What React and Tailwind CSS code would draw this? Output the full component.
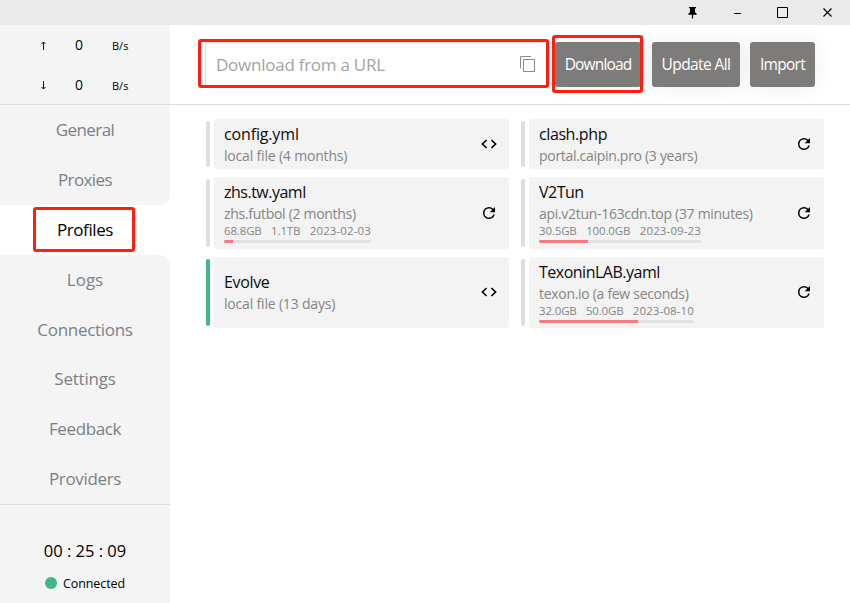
const NAV = ['General', 'Proxies', 'Profiles', 'Logs', 'Connections', 'Settings', 'Feedback', 'Providers'];

// tracking classes keep each label at its intended width
const NAV_TRACKING = {
  General: 'tracking-[-0.6px]',
  Proxies: 'tracking-[-0.6px]',
  Profiles: 'tracking-[-0.4px]',
  Logs: 'tracking-[0px]',
  Connections: 'tracking-[-0.3px]',
  Settings: 'tracking-[-0.2px]',
  Feedback: 'tracking-[-0.4px]',
  Providers: 'tracking-[-0.35px]',
};

const PROFILES = [
  { name: 'config.yml', tracking: 'tracking-[-0.15px]', info: 'local file (4 months)', local: true },
  { name: 'clash.php', tracking: 'tracking-[-0.4px]', info: 'portal.caipin.pro (3 years)' },
  { name: 'zhs.tw.yaml', tracking: 'tracking-[-0.5px]', info: 'zhs.futbol (2 months)', usage: ['68.8GB', '1.1TB', '2023-02-03'], width: 'w-[147px]', percent: 6 },
  { name: 'V2Tun', tracking: 'tracking-[-0.5px]', info: 'api.v2tun-163cdn.top (37 minutes)', usage: ['30.5GB', '100.0GB', '2023-09-23'], width: 'w-[162px]', percent: 30.5 },
  { name: 'Evolve', tracking: 'tracking-[-0.35px]', info: 'local file (13 days)', local: true, active: true },
  { name: 'TexoninLAB.yaml', tracking: 'tracking-[-0.5px]', info: 'texon.io (a few seconds)', usage: ['32.0GB', '50.0GB', '2023-08-10'], width: 'w-[155px]', percent: 64 },
];

function CodeIcon() {
  return (
    <svg width="16" height="10" viewBox="0 0 16 10" fill="none" stroke="#000" strokeWidth="1.6">
      <path d="M5.6 1 1.4 5l4.2 4M10.4 1l4.2 4-4.2 4" />
    </svg>
  );
}

function RefreshIcon() {
  return (
    <svg width="18" height="18" viewBox="0 0 24 24" fill="#000">
      <path d="M17.65 6.35A7.96 7.96 0 0 0 12 4a8 8 0 1 0 7.73 10h-2.08A6 6 0 1 1 12 6c1.66 0 3.14.69 4.22 1.78L13 11h7V4z" />
    </svg>
  );
}

function ProfileCard({ profile }) {
  const { name, tracking, info, usage, width, percent, local, active } = profile;
  return (
    <div className="flex gap-1">
      <div className={`my-0.5 w-1 rounded-sm ${active ? 'bg-[#41b883]' : 'bg-[#dedede]'}`} />
      <div className="flex w-[295px] items-center justify-between rounded-[3px] bg-[#f3f3f3] pl-2.5 pr-[11px]">
        <div className={`whitespace-nowrap ${usage ? 'pb-0.5' : active ? '' : 'pt-0.5'}`}>
          <div className={`text-[16px] leading-[22px] text-[#0c0c0c] ${tracking}`}>{name}</div>
          <div className={`text-[14px] leading-[22px] text-[#858585] ${local ? 'tracking-[-0.18px]' : 'tracking-[-0.3px]'}`}>{info}</div>
          {usage && (
            <div className={width}>
              <div className="flex justify-between text-[11.5px] leading-[12px] text-[#858585]">
                <span className="tracking-[-0.15px]">{usage[0]}</span>
                <span className="tracking-[-0.15px]">{usage[1]}</span>
                <span className="tracking-[0.12px]">{usage[2]}</span>
              </div>
              <div className="mt-[3px] h-[3px] overflow-hidden rounded-full bg-[#e1e1e1]">
                <div className="h-full bg-[#f67b80]" style={{ width: `${percent}%` }} />
              </div>
            </div>
          )}
        </div>
        <div className={`flex w-[18px] justify-center ${active || name === 'TexoninLAB.yaml' ? 'pb-px' : ''}`}>
          {local ? <CodeIcon /> : <RefreshIcon />}
        </div>
      </div>
    </div>
  );
}

function TitleBar() {
  return (
    <div className="flex h-[25px] items-center justify-end bg-[#eaeaea] text-black">
      <div className="flex w-[45px] justify-center">
        <svg width="9" height="12" viewBox="0 0 9 12" fill="#000">
          <path d="M1 0h7v1.3H7v4l1.7 1.4v1H5.1V11l-.6 1-.6-1V7.700H.3v-1L2 5.300v-4H1z" />
        </svg>
      </div>
      <div className="flex w-[45px] justify-center">
        <svg width="9" height="11" viewBox="0 0 9 11"><path d="M1 6.500h7" stroke="#000" /></svg>
      </div>
      <div className="flex w-[45px] justify-center">
        <svg width="11" height="11" viewBox="0 0 11 11"><path d="M.5.500h10v10H.5z" fill="none" stroke="#000" /></svg>
      </div>
      <div className="flex w-[45px] justify-center">
        <svg width="9" height="9" viewBox="0 0 9 9"><path d="m.5.500 8 8m0-8-8 8" stroke="#000" strokeWidth="1.1" /></svg>
      </div>
    </div>
  );
}

function Speed({ up }) {
  return (
    <div className="flex h-10 items-center">
      <svg className="ml-10" width="7" height="9" viewBox="0 0 7 9" fill="none" stroke="#111">
        <path d={up ? 'M3.500 9V1M1.500 3l2-2 2 2' : 'M3.500 0v8M1.500 6l2 2 2-2'} />
      </svg>
      <span className="w-16 pb-0.5 text-center text-[14px]">0</span>
      <span className="pl-px pt-0.5 text-[11px]">B/s</span>
    </div>
  );
}

function Sidebar() {
  return (
    <div className="flex w-[170px] flex-col">
      <div className="h-20 border-b border-[#dcdcdc] bg-[#f4f4f4] text-black">
        <Speed up />
        <Speed />
      </div>
      <div className="grid h-[399px] grid-rows-[50px_50px_50px_50px_49px_50px_50px_50px] text-[17px] text-[#7b8086]">
        {NAV.map((item) => {
          const shape = item === 'Profiles' ? 'bg-white text-black' : item === 'Proxies' ? 'bg-[#f4f4f4] rounded-br-[10px]' : item === 'Logs' ? 'bg-[#f4f4f4] rounded-tr-[10px]' : 'bg-[#f4f4f4]';
          return (
            <div key={item} className={`relative flex items-center justify-center ${shape} ${NAV_TRACKING[item]}`}>
              {item}
              {item === 'Profiles' && <div className="absolute left-[33px] top-[2px] h-[45px] w-[102px] rounded-[3px] border-[3px] border-[#ff1e10]" />}
            </div>
          );
        })}
      </div>
      <div className="flex flex-1 flex-col items-center border-t border-[#dcdcdc] bg-[#f4f4f4] pt-[34px] text-black">
        <div className="whitespace-nowrap text-[16.5px] leading-6">00 : 25 : 09</div>
        <div className="mt-2.5 flex items-center gap-1.5 text-[12.5px] leading-[22px] tracking-[-0.1px]">
          <span className="mb-0.5 size-3 rounded-full bg-[#41b883]" />
          Connected
        </div>
      </div>
    </div>
  );
}

function Button({ className, children }) {
  return (
    <button className={`h-[45px] whitespace-nowrap rounded-[3px] bg-[#7e7c7a] text-[15.5px] text-white shadow-[0_0_20px_rgba(0,0,0,0.08)] ${className}`}>
      {children}
    </button>
  );
}

function Header() {
  return (
    <div className="flex h-20 items-start border-b border-[#dcdcdc] pl-[35px] pt-[17px]">
      <div className="relative flex h-[45px] w-[340px] items-center justify-between rounded-[3px] border border-[#dcdfe0] border-r-transparent pl-2.5 pr-[9px]">
        <span className="text-[17px] tracking-[-0.25px] text-[#a3a3a3]">Download from a URL</span>
        <svg width="15" height="17" viewBox="0 0 15 17" fill="none" stroke="#8b8b8b">
          <path d="M3.500 3.500h11v12h-11zM.5 12.500V.500h10.500" />
        </svg>
        <div className="absolute -left-2 -top-1 h-[49px] w-[351px] rounded-[3px] border-[3px] border-[#ff1e10]" />
      </div>
      <div className="relative ml-2.5">
        <Button className="w-[86px] tracking-[-0.85px]">Download</Button>
        <div className="absolute -left-[3px] -top-[7px] h-[58px] w-[91px] rounded-[3px] border-[3px] border-[#ff1e10]" />
      </div>
      <div className="ml-[11px] flex gap-2.5">
        <Button className="w-[88px] tracking-[-0.6px]">Update All</Button>
        <Button className="w-[65px] tracking-[-0.7px]">Import</Button>
      </div>
    </div>
  );
}

export default function App() {
  return (
    <div className="flex h-[603px] w-[850px] flex-col overflow-hidden bg-white font-['Open_Sans','Noto_Sans',sans-serif]">
      <TitleBar />
      <div className="flex flex-1">
        <Sidebar />
        <div className="flex-1">
          <Header />
          <div className="ml-9 mt-3.5 grid grid-cols-[303px_303px] grid-rows-[50px_72px_71px] gap-x-3 gap-y-2">
            {PROFILES.map((profile) => (
              <ProfileCard key={profile.name} profile={profile} />
            ))}
          </div>
        </div>
      </div>
    </div>
  );
}
